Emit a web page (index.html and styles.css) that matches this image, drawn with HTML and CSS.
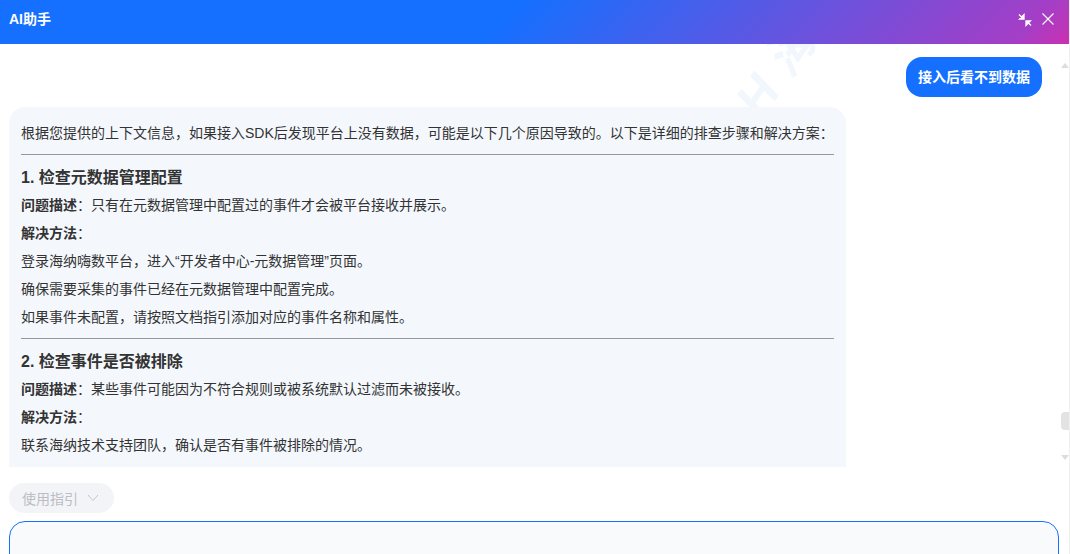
FILE: index.html
```html
<!DOCTYPE html>
<html lang="zh-CN">
<head>
<meta charset="utf-8">
<title>AI助手</title>
<link rel="stylesheet" href="styles.css">
</head>
<body>
<div class="app">
  <header class="header">
    <span class="title">AI助手</span>
    <div class="actions">
      <svg class="icon icon-shrink" width="14" height="14" viewBox="0 0 14 14"><path d="M1 1.5 5 5.5M6 1.6V6H1.6Z M13 12.5 9 8.5M8 12.4V8H12.4Z" fill="#fff" stroke="#fff" stroke-width="1.3"/></svg>
      <svg class="icon" width="14" height="14" viewBox="0 0 14 14"><path d="M1.5 1.5 12.5 12.5M12.5 1.5 1.5 12.5" fill="none" stroke="#fff" stroke-width="1.1"/></svg>
    </div>
  </header>
  <main class="chat">
    <div class="messages">
      <div class="watermark">H 海</div>
      <div class="user-row"><div class="user-msg">接入后看不到数据</div></div>
      <article class="answer">
        <p>根据您提供的上下文信息，如果接入SDK后发现平台上没有数据，可能是以下几个原因导致的。以下是详细的排查步骤和解决方案：</p>
        <hr>
        <h3>1. 检查元数据管理配置</h3>
        <p><strong>问题描述</strong>：只有在元数据管理中配置过的事件才会被平台接收并展示。</p>
        <p><strong>解决方法</strong>：</p>
        <p>登录海纳嗨数平台，进入“开发者中心-元数据管理”页面。</p>
        <p>确保需要采集的事件已经在元数据管理中配置完成。</p>
        <p>如果事件未配置，请按照文档指引添加对应的事件名称和属性。</p>
        <hr>
        <h3>2. 检查事件是否被排除</h3>
        <p><strong>问题描述</strong>：某些事件可能因为不符合规则或被系统默认过滤而未被接收。</p>
        <p><strong>解决方法</strong>：</p>
        <p>联系海纳技术支持团队，确认是否有事件被排除的情况。</p>
      </article>
    </div>
    <div class="scrollbar">
      <span class="arrow up"></span>
      <span class="thumb"></span>
      <span class="arrow down"></span>
    </div>
  </main>
  <div class="footer">
    <button class="guide">使用指引<svg width="12" height="8" viewBox="0 0 12 8"><path d="M1 1 6 6.5 11 1" fill="none" stroke="#c4c6cc" stroke-width="1"/></svg></button>
    <div class="input"></div>
  </div>
</div>
</body>
</html>
```
FILE: styles.css
```css
* { box-sizing: border-box; }
html, body { margin: 0; height: 100%; overflow: hidden; }
body { font-family: "Liberation Sans", "Noto Sans CJK SC", sans-serif; font-size: 14px; color: #333; background: #fff; }
.app { height: 554px; display: flex; flex-direction: column; border-right: 1px solid #f0f0f0; }
.header { height: 44px; flex: none; display: flex; align-items: center; justify-content: space-between; padding: 0 14px 0 9px; color: #fff; background: linear-gradient(135deg, #1570ff 47%, #a53ec6 95%, #cc30b0 100%); }
.title { font-size: 14px; font-weight: 700; margin-top: -8px; }
.actions { display: flex; gap: 9px; align-items: center; margin-top: -7px; }
.icon { display: block; }
.icon-shrink { margin-top: 2px; }
.chat { height: 423px; flex: none; position: relative; display: flex; }
.messages { flex: 1; position: relative; overflow: hidden; padding: 13px 0 0 9px; }
.watermark { position: absolute; left: 722px; top: -13px; font-size: 50px; font-weight: 700; font-style: italic; color: #f1f7fd; transform: rotate(-55deg); white-space: nowrap; }
.user-row { position: relative; display: flex; justify-content: flex-end; padding-right: 6px; }
.user-msg { height: 40px; line-height: 40px; padding: 0 12px; border-radius: 16px; background: #1570ff; color: #fff; font-weight: 700; font-size: 14px; }
.answer { position: relative; width: 837px; margin-top: 10px; padding: 12px 12px 0; height: 400px; border-radius: 16px 16px 0 0; background: #f4f8fd; }
.answer p { margin: 0; line-height: 28px; font-size: 14px; }
.answer strong { font-weight: 700; }
.answer hr { margin: 7px 0 9px; height: 1px; border: 0; background: #999; }
.answer h3 { margin: 0; line-height: 27px; font-size: 16px; font-weight: 700; }
.scrollbar { width: 21px; flex: none; position: relative; }
.arrow { position: absolute; right: 0; width: 0; height: 0; border-left: 4px solid transparent; border-right: 4px solid transparent; }
.arrow.up { top: 19px; border-bottom: 5px solid #ddd; }
.arrow.down { top: 411px; border-top: 5px solid #ddd; }
.thumb { position: absolute; right: 0; top: 368px; width: 8px; height: 18px; border-radius: 4px 0 0 4px; background: #e3e3e3; }
.footer { flex: 1; padding: 16px 10px 0 9px; min-height: 0; }
.guide { display: flex; align-items: center; gap: 9px; height: 30px; width: 105px; padding: 0 13px; border: 0; border-radius: 15px; background: #f3f4f7; color: #bbbdc3; font: 14px "Liberation Sans", "Noto Sans CJK SC", sans-serif; }
.input { height: 60px; margin-top: 8px; border: 1px solid #1570ff; border-radius: 16px; background: #f9fafc; }
```
